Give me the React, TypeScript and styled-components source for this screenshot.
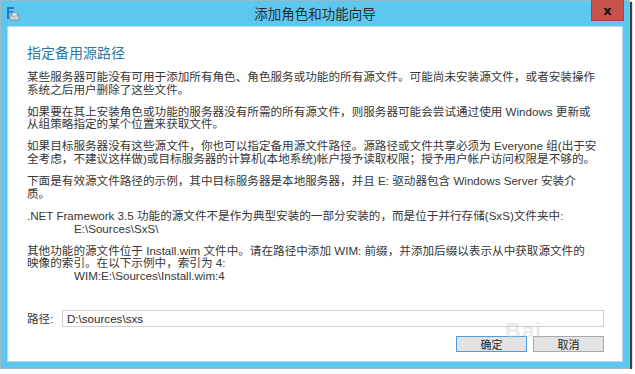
import React from "react";
import styled, { createGlobalStyle } from "styled-components";

const Global = createGlobalStyle`
  html, body { margin: 0; padding: 0; background: #ffffff; }
  body { font-family: "Liberation Sans", "Noto Sans CJK SC", sans-serif; }
`;

const Window = styled.div`
  box-sizing: border-box;
  width: 630px;
  height: 369px;
  background: #5cc7ef;
  border: 1px solid #9fb9c4;
  box-shadow: 2px 2px 1px rgba(30, 30, 30, 0.85);
  display: flex;
  flex-direction: column;
`;

const TitleBar = styled.div`
  height: 25px;
  display: flex;
  align-items: flex-start;
  position: relative;
`;

const TitleIcon = styled.div`
  width: 14px;
  height: 16px;
  margin: 5px 0 0 5px;
`;

const TitleText = styled.div`
  position: absolute;
  left: 0;
  right: 0;
  top: 3px;
  text-align: center;
  font-family: "Noto Sans CJK SC", sans-serif;
  font-size: 13.5px;
  line-height: 18px;
  color: #2b2b2b;
  pointer-events: none;
`;

const CloseButton = styled.div`
  margin-left: auto;
  margin-right: 5px;
  margin-top: -1px;
  width: 33px;
  height: 21px;
  background: #c9514b;
  border: 1px solid #a8443f;
  border-top: none;
  box-sizing: border-box;
  display: flex;
  align-items: center;
  justify-content: center;
  color: #111;
  font-family: "DejaVu Sans", sans-serif;
  font-weight: bold;
  font-size: 13px;
  line-height: 13px;
`;

const Client = styled.div`
  flex: 1;
  background: #ffffff;
  margin: 0 6px 6px 6px;
  padding: 16px 18px 0 19px;
  display: flex;
  flex-direction: column;
  color: #363636;
  border: 1px solid #b7d7e4;
`;

const Heading = styled.div`
  font-family: "Noto Sans CJK SC", sans-serif;
  font-size: 14px;
  line-height: 18px;
  color: #2c79a5;
  margin-bottom: 10px;
`;

const Para = styled.div`
  font-size: 11.6px;
  line-height: 12.7px;
  margin-bottom: 9.3px;
  white-space: nowrap;
`;

const Line = styled.div<{ $indent?: boolean }>`
  padding-left: ${(p) => (p.$indent ? "47px" : "0")};
`;

const PathRow = styled.div`
  display: flex;
  align-items: center;
  margin-top: 18px;
  font-size: 11.6px;
`;

const PathLabel = styled.div`
  width: 35px;
`;

const PathInput = styled.div`
  flex: 1;
  height: 17px;
  box-sizing: border-box;
  border: 1px solid #cfcfcf;
  padding-left: 4px;
  display: flex;
  align-items: center;
  font-size: 11.6px;
  color: #2a2a2a;
`;

const ButtonRow = styled.div`
  display: flex;
  justify-content: flex-end;
  gap: 6px;
  margin-top: 9px;
`;

const Button = styled.div<{ $default?: boolean }>`
  width: 71px;
  height: 16px;
  box-sizing: border-box;
  background: #e3e3e3;
  border: 1px solid ${(p) => (p.$default ? "#4f9fe0" : "#a9a9a9")};
  display: flex;
  align-items: center;
  justify-content: center;
  font-family: "Noto Sans CJK SC", sans-serif;
  font-size: 11px;
  color: #222;
`;

const Watermark = styled.div`
  position: absolute;
  left: 505px;
  top: 318px;
  font-family: "Liberation Sans", sans-serif;
  font-size: 22px;
  font-weight: bold;
  color: rgba(200, 200, 200, 0.4);
  pointer-events: none;
  letter-spacing: 1px;
`;

const Page = styled.div`
  position: relative;
`;

export default function App() {
  return (
    <Page>
      <Global />
      <Window>
        <TitleBar>
          <TitleIcon>
            <svg width="14" height="16" viewBox="0 0 14 16">
              <rect x="1" y="1" width="2" height="12" fill="#2a73c7" />
              <rect x="1" y="1" width="7" height="2" fill="#2a73c7" />
              <rect x="1" y="5" width="6" height="1.5" fill="#2a73c7" />
              <rect x="4" y="9" width="9" height="5" rx="1" fill="#c9d3da" stroke="#7d8a94" strokeWidth="0.8" />
              <rect x="6" y="7" width="5" height="3" fill="#eef2f5" stroke="#7d8a94" strokeWidth="0.6" />
            </svg>
          </TitleIcon>
          <TitleText>添加角色和功能向导</TitleText>
          <CloseButton>x</CloseButton>
        </TitleBar>
        <Client>
          <Heading>指定备用源路径</Heading>
          <Para>
            <Line>某些服务器可能没有可用于添加所有角色、角色服务或功能的所有源文件。可能尚未安装源文件，或者安装操作</Line>
            <Line>系统之后用户删除了这些文件。</Line>
          </Para>
          <Para>
            <Line>如果要在其上安装角色或功能的服务器没有所需的所有源文件，则服务器可能会尝试通过使用 Windows 更新或</Line>
            <Line>从组策略指定的某个位置来获取文件。</Line>
          </Para>
          <Para>
            <Line>如果目标服务器没有这些源文件，你也可以指定备用源文件路径。源路径或文件共享必须为 Everyone 组(出于安</Line>
            <Line>全考虑，不建议这样做)或目标服务器的计算机(本地系统)帐户授予读取权限；授予用户帐户访问权限是不够的。</Line>
          </Para>
          <Para>
            <Line>下面是有效源文件路径的示例，其中目标服务器是本地服务器，并且 E: 驱动器包含 Windows Server 安装介</Line>
            <Line>质。</Line>
          </Para>
          <Para>
            <Line>.NET Framework 3.5 功能的源文件不是作为典型安装的一部分安装的，而是位于并行存储(SxS)文件夹中:</Line>
            <Line $indent>E:\Sources\SxS\</Line>
          </Para>
          <Para>
            <Line>其他功能的源文件位于 Install.wim 文件中。请在路径中添加 WIM: 前缀，并添加后缀以表示从中获取源文件的</Line>
            <Line>映像的索引。在以下示例中，索引为 4:</Line>
            <Line $indent>WIM:E:\Sources\Install.wim:4</Line>
          </Para>
          <PathRow>
            <PathLabel>路径:</PathLabel>
            <PathInput>D:\sources\sxs</PathInput>
          </PathRow>
          <ButtonRow>
            <Button $default>确定</Button>
            <Button>取消</Button>
          </ButtonRow>
        </Client>
      </Window>
      <Watermark>Bai</Watermark>
    </Page>
  );
}
